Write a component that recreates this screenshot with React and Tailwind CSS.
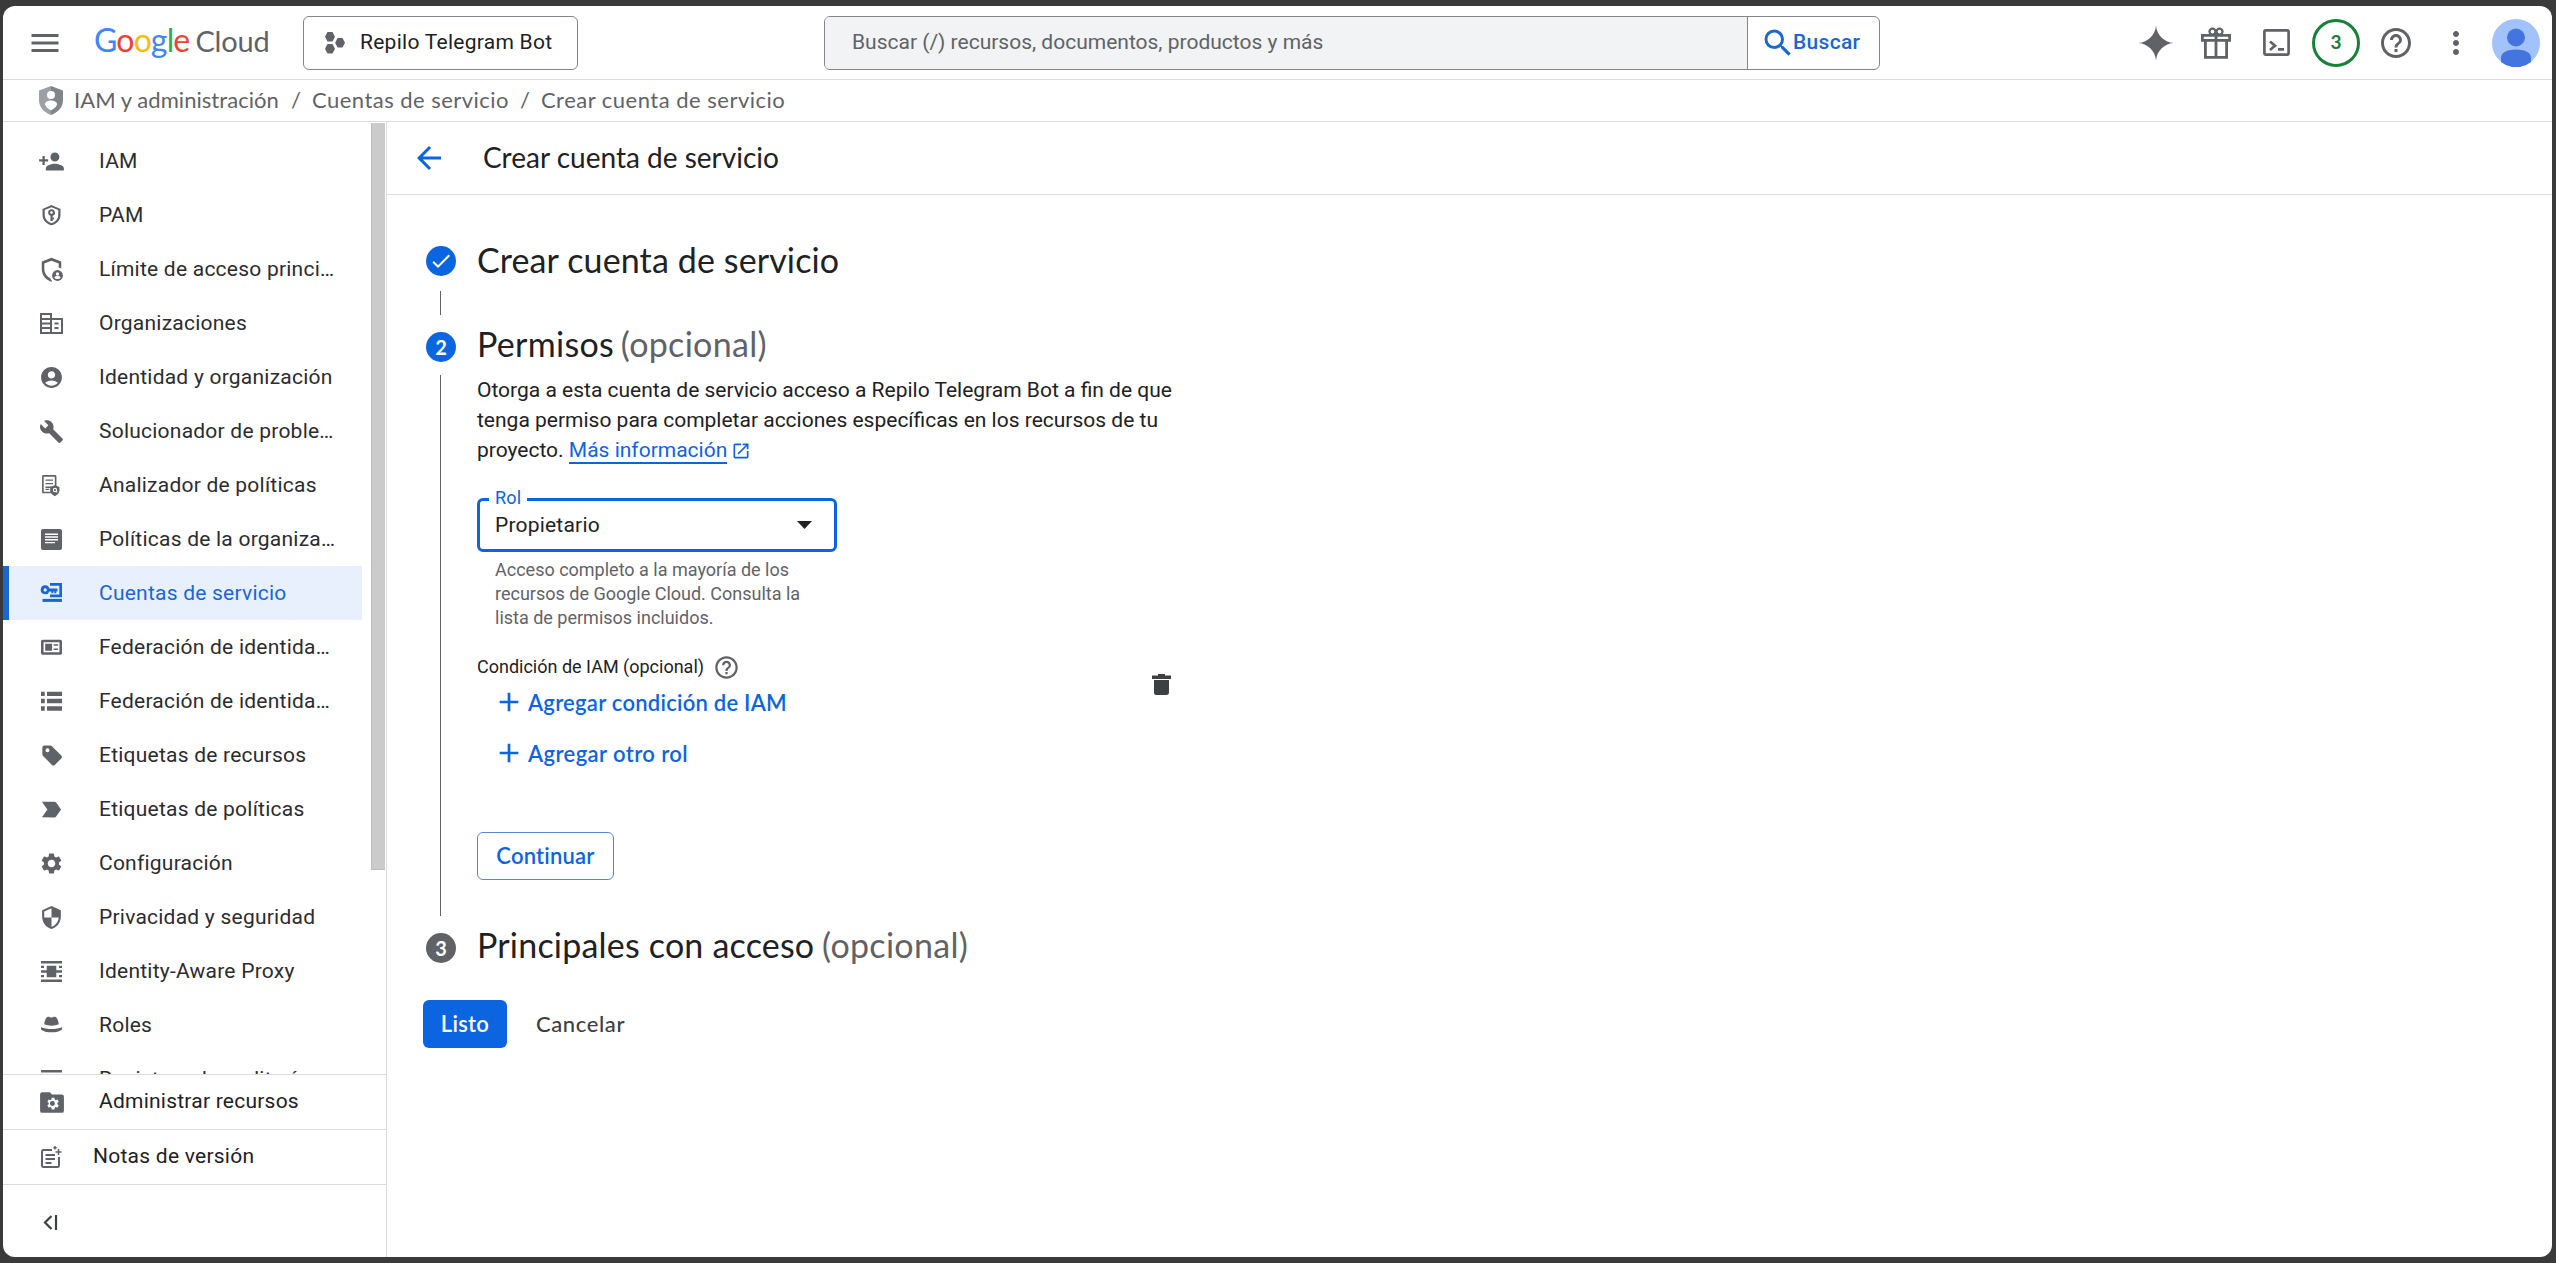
import React from "react";
import {
  MdPersonAdd, MdAccountCircle, MdBuild, MdLabelImportant,
  MdSettings, MdSecurity, MdHelpOutline, MdMoreVert, MdSearch, MdArrowBack, MdOpenInNew, MdMenu, MdAdd, MdCheck,
} from "react-icons/md";

const G = "font-['Lato',sans-serif]";

function Svg({ children, size = 27, box = 18, className = "" }) {
  return (
    <svg width={size} height={size} viewBox={`0 0 ${box} ${box}`} fill="currentColor" className={className}>
      {children}
    </svg>
  );
}

const ShieldKey = () => (
  <Svg>
    <path d="M9 2.400 15 5v4c0 3.300-2.400 5.800-6 6.900C5.400 14.800 3 12.300 3 9V5z" transform="translate(0 -.35)" />
    <path d="M9 3.500 13.500 5.300V8.700c0 2.500-1.700 4.500-4.500 5.500-2.800-1-4.500-3-4.500-5.500V5.300z" fill="#fff" />
    <path fillRule="evenodd" d="M9 4.800a2.200 2.200 0 0 0-.7 4.300v3.500h1.500v-.9h.8v-1.300h-.8V9.100A2.200 2.200 0 0 0 9 4.800zm0 1.300a.9.9 0 1 1 0 1.800.9.900 0 0 1 0-1.800z" />
  </Svg>
);

const ShieldPerson = () => (
  <Svg>
    <path d="M9 1.200 2.500 3.700v5.100c0 3.800 2.600 7 6.300 8.300l.6-.2-1.300-2.100C5.700 13.500 4.200 11.300 4.200 8.800V5L9 3.100 13.800 5v2.700l1.700.6V3.700z" />
    <circle cx="13" cy="13" r="3.600" />
    <circle cx="13" cy="12" r="1.100" fill="#fff" />
    <path d="M10.900 14.400c.4-.9 1.200-1 2.100-1s1.700.1 2.100 1c-.5.700-1.200 1-2.100 1s-1.600-.3-2.100-1z" fill="#fff" />
  </Svg>
);

const Building = () => (
  <svg width="23" height="21" viewBox="0 0 23 21" fill="none" stroke="currentColor" strokeWidth="2">
    <path d="M1 1h10v19H1zM11 6h11v14H11M1 6h10M1 10.500h10M1 15h10M14.500 10.500h4M14.500 15h4" />
  </svg>
);

const Article = () => (
  <svg width="21" height="21" viewBox="0 0 21 21">
    <rect width="21" height="21" rx="2" fill="currentColor" />
    <path d="M4 5.200h13M4 8h13M4 10.800h13M4 13.600h10" stroke="#fff" strokeWidth="1.400" />
  </svg>
);

const DocSearch = () => (
  <Svg>
    <path fillRule="evenodd" d="M3.600 2h7.800c.5 0 .9.400.9.900v6.600h-1.100V3.100H3.800v10h4.800v1.100h-5c-.5 0-.9-.4-.9-.9V2.900c0-.5.400-.9.900-.9z" />
    <path d="M5 5h5v.9H5zm0 2.300h5v.9H5zm0 2.400h4v.9H5zm0 1.500h2.500v.8H5z" />
    <path d="M11.200 8.800l3.100 1.200v2.200c0 1.800-1.300 3.200-3.100 3.900-1.800-.7-3.100-2.100-3.100-3.900V10z" />
    <circle cx="11.300" cy="12" r="1.100" fill="none" stroke="#fff" strokeWidth=".7" />
    <path d="M12 12.800l.8.800" stroke="#fff" strokeWidth=".7" />
  </Svg>
);

const KeyDesk = () => (
  <Svg>
    <path d="M8 2h8v9.500H8V9.700h6.200V3.800H8z" />
    <path d="M4.800 3.500a3 3 0 1 0 2.800 4.100h1.300v1.200h1.300V7.600h.7v1.200h1.300V7.600H13V5.700H7.600a3 3 0 0 0-2.800-2.200zm0 2a1.100 1.100 0 1 1 0 2.200 1.100 1.100 0 0 1 0-2.200z" fillRule="evenodd" />
    <path d="M3 12.600h13v2H3z" />
  </Svg>
);

const IdCard = () => (
  <Svg>
    <path fillRule="evenodd" d="M3.200 3.800h11.600c.7 0 1.200.5 1.200 1.200v7.600c0 .7-.5 1.200-1.200 1.200H3.200c-.7 0-1.200-.5-1.200-1.200V5c0-.7.5-1.200 1.200-1.200zm.5 1.700v6.600h10.600V5.500z" />
    <path d="M4.800 6.500h4.600v4.600H4.800zm5.600.3h3v1.100h-3zm0 2.800h3v1.100h-3z" />
  </Svg>
);

const Rows = () => (
  <Svg>
    <path d="M2 2.500h2.500v2.900H2zm4 0h10v2.900H6zM2 7.200h2.500v3H2zm4 0h10v3H6zm-4 4.900h2.500v3H2zm4 0h10v3H6z" />
  </Svg>
);

const Tag = () => (
  <Svg>
    <path fillRule="evenodd" d="M4.400 2.300h3.700c.5 0 .9.200 1.200.5l6.200 6.200c.6.600.6 1.400 0 2l-4.300 4.300c-.5.500-1.300.5-1.900 0L3.400 9.400c-.3-.3-.5-.7-.5-1.200V3.700c0-.8.700-1.400 1.500-1.400zM6.300 4.200a1.300 1.300 0 1 0 0 2.600 1.300 1.300 0 0 0 0-2.600z" />
  </Svg>
);

const Proxy = () => (
  <Svg>
    <path d="M2 2h14v1.700H2zm0 12.300h14V16H2zM5.800 5.200h6.400v7.600H5.800zM2 8.200h14v1.600H2zM2 5.200h2v1.400H2zm12 0h2v1.400h-2zM2 11.400h2v1.400H2zm12 0h2v1.400h-2z" />
  </Svg>
);

const Hat = () => (
  <Svg>
    <path d="M6.300 3.300c.9-.4 1.700.4 2.700.4s1.800-.8 2.700-.4c1.300.5 1.900 3 2.200 4.900-1.400.6-3 .9-4.900.9s-3.500-.3-4.900-.9c.3-1.900.9-4.400 2.200-4.900z" />
    <path d="M2 10.200c2 .8 4.300 1.200 7 1.200s5-.4 7-1.200v1.400c-1.500 1.300-4 1.900-7 1.900s-5.500-.6-7-1.900z" />
  </Svg>
);

const ListBars = () => (
  <Svg>
    <path d="M2 2.600h14v1.700H2zm0 4h14v1.700H2zm0 4h14v1.700H2z" />
  </Svg>
);

const md = (C, size = 25) => () => <C size={size} />;

const NAV = [
  [md(MdPersonAdd, 27), "IAM"],
  [ShieldKey, "PAM"],
  [ShieldPerson, "Límite de acceso princi…"],
  [Building, "Organizaciones"],
  [md(MdAccountCircle), "Identidad y organización"],
  [md(MdBuild), "Solucionador de proble…"],
  [DocSearch, "Analizador de políticas"],
  [Article, "Políticas de la organiza…"],
  [KeyDesk, "Cuentas de servicio"],
  [IdCard, "Federación de identida…"],
  [Rows, "Federación de identida…"],
  [Tag, "Etiquetas de recursos"],
  [md(MdLabelImportant, 27), "Etiquetas de políticas"],
  [md(MdSettings), "Configuración"],
  [md(MdSecurity), "Privacidad y seguridad"],
  [Proxy, "Identity-Aware Proxy"],
  [Hat, "Roles"],
  [ListBars, "Registros de auditoría"],
];
const ACTIVE = 8;

function Header() {
  return (
    <header className="flex h-[74px] shrink-0 items-center border-b border-[#dadce0] text-[#5f6368]">
      <MdMenu size={36} className="ml-6 shrink-0" />
      <div className={`ml-[31px] flex w-[209px] shrink-0 items-baseline whitespace-nowrap pb-[5px] text-[32px] leading-9 ${G}`}>
        <span className="tracking-[-0.85px]">
          <span className="text-[#4285f4]">G</span><span className="text-[#ea4335]">o</span>
          <span className="text-[#fbbc04]">o</span><span className="text-[#4285f4]">g</span>
          <span className="text-[#34a853]">l</span><span className="text-[#ea4335]">e</span>
        </span>
        <span className="ml-[6px] text-[29px] tracking-[-0.2px]">Cloud</span>
      </div>
      <button className="flex h-[54px] w-[275px] items-center rounded-md border border-[#80868b] pl-[21px] text-[21px] text-[#202124]">
        <svg width="20" height="22" viewBox="0 0 20 22" fill="#5f6368">
          <path d="M2.500 0h5L10 4.800 7.500 9.500h-5L0 4.800zM12.600 6h4.900L20 10.700l-2.500 4.700h-4.900l-2.500-4.700zM2.500 12h5l2.500 4.700L7.500 21.500h-5L0 16.700z" />
        </svg>
        <span className="ml-[15px] tracking-[0.27px]">Repilo Telegram Bot</span>
      </button>
      <div className="ml-[246px] flex h-[54px] w-[1056px] overflow-hidden rounded-md border border-[#80868b] text-[21px]">
        <div className="flex w-[922px] items-center bg-[#f1f3f4] pl-[27px]">
          <span>Buscar (/) recursos, documentos, productos y más</span>
        </div>
        <div className="flex flex-1 items-center border-l border-[#80868b] pl-3 font-medium text-[#1967d2]">
          <MdSearch size={36} />
          <span className="-ml-[3px] tracking-[0.3px]">Buscar</span>
        </div>
      </div>
      <div className="ml-auto mr-3 flex items-center gap-3">
        <div className="flex size-12 items-center justify-center">
          <svg width="36" height="36" viewBox="0 0 36 36" fill="#5f6368">
            <path d="M18 .5C18.800 10 26 17.200 35.500 18 26 18.800 18.800 26 18 35.500 17.200 26 10 18.800.5 18 10 17.200 17.200 10 18 .5z" />
          </svg>
        </div>
        <div className="flex size-12 items-center justify-center">
          <svg width="30" height="32" viewBox="0 0 30 32" fill="none" stroke="#5f6368" strokeWidth="2.800">
            <path d="M1.400 8.400h27.200v5H1.400zM4.400 13.400v17h21.200v-17M15 6v24" />
            <circle cx="11.500" cy="4.600" r="3" strokeWidth="2.300" />
            <circle cx="18.500" cy="4.600" r="3" strokeWidth="2.300" />
          </svg>
        </div>
        <div className="flex size-12 items-center justify-center">
          <svg width="27" height="27" viewBox="0 0 27 27" fill="none" stroke="#5f6368" strokeWidth="2.700">
            <rect x="1.400" y="1.400" width="24.200" height="24.200" rx="1.500" />
            <path d="M7 12.500l5 4.300-5 4.300M15 20.300h6" />
          </svg>
        </div>
        <div className={`flex size-12 items-center justify-center rounded-full border-3 border-[#188038] text-[19px] font-bold text-[#188038] ${G}`}>3</div>
        <div className="flex size-12 items-center justify-center"><MdHelpOutline size={36} /></div>
        <div className="flex size-12 items-center justify-center"><MdMoreVert size={36} /></div>
        <svg width="48" height="48" viewBox="0 0 48 48">
          <circle cx="24" cy="24" r="24" fill="#a1c2fa" />
          <circle cx="24" cy="18.500" r="9" fill="#4374e0" />
          <path d="M9 43v-4c0-5 5-8.500 15-8.500S39 34 39 39v4a24 24 0 0 1-30 0z" fill="#4374e0" />
        </svg>
      </div>
    </header>
  );
}

function Breadcrumb() {
  return (
    <nav className={`flex h-[42px] shrink-0 items-center whitespace-nowrap border-b border-[#dadce0] pl-9 text-[22px] leading-6 text-[#5f6368] ${G}`}>
      <svg width="24" height="29" viewBox="0 0 24 29">
        <path d="M12 0 0 4.500V14c0 7 5 12.500 12 15z" fill="#9aa0a6" />
        <path d="M12 0l12 4.500V14c0 7-5 12.500-12 15z" fill="#80868b" />
        <circle cx="12" cy="9" r="4" fill="#fff" />
        <path d="M6 18.500c0-3 3-4 6-4s6 1 6 4c-1 2.700-3.300 4.700-6 5.700-2.700-1-5-3-6-5.700z" fill="#fff" />
      </svg>
      <div className="flex pb-0.5">
        <span className="ml-[11px] w-[217px] tracking-[0.05px]">IAM y administración</span>
        <span className="w-[21px]">/</span>
        <span className="w-[208px] tracking-[0.47px]">Cuentas de servicio</span>
        <span className="w-[21px]">/</span>
        <span className="tracking-[0.49px]">Crear cuenta de servicio</span>
      </div>
    </nav>
  );
}

function Sidebar() {
  return (
    <aside className="flex w-[384px] shrink-0 flex-col border-r border-[#dadce0] text-[21px] text-[#202124]">
      <div className="flex h-[952px] overflow-hidden">
        <ul className="w-[359px] pt-3">
          {NAV.map(([Icon, label], i) => (
            <li
              key={i}
              className={
                "flex h-[54px] items-center border-l-6 " +
                (i === ACTIVE ? "border-[#1967d2] bg-[#e8f0fe] text-[#1967d2]" : "border-transparent text-[#2b2c2f]")
              }
            >
              <span className={"ml-7 flex w-[29px] shrink-0 justify-center " + (i === ACTIVE ? "" : "text-[#5f6368]")}>
                <Icon />
              </span>
              <span className="ml-[33px] whitespace-nowrap pt-px tracking-[0.23px]">{label}</span>
            </li>
          ))}
        </ul>
        <div className="ml-[9px] mt-px h-[747px] w-3.5 border-b border-l border-[#bdbdbd] bg-[#cbcbcb]" />
      </div>
      <div className="flex h-[55px] items-center border-t border-[#dadce0] pl-9">
        <Svg box={24} size={26} className="text-[#5f6368]">
          <path d="M10 3H3a2 2 0 0 0-2 2v15a2 2 0 0 0 2 2h18a2 2 0 0 0 2-2V7a2 2 0 0 0-2-2h-9z" />
          <g transform="translate(4.700 5.800) scale(.64)" fill="#fff">
            <path d="M19.140 12.940c.04-.3.060-.61.060-.94s-.02-.64-.07-.94l2.030-1.580-1.920-3.320-2.390.96c-.5-.38-1.030-.7-1.620-.94l-.36-2.540h-3.840l-.36 2.540c-.59.24-1.130.57-1.620.94l-2.390-.96-1.920 3.320 2.030 1.580c-.05.3-.09.63-.09.94s.02.64.070.94l-2.030 1.580 1.920 3.320 2.390-.96c.5.38 1.030.7 1.620.94l.36 2.540h3.840l.36-2.540c.59-.24 1.130-.56 1.620-.94l2.390.96 1.920-3.320zM12 15.600a3.600 3.600 0 1 1 0-7.200 3.600 3.600 0 0 1 0 7.200z" />
          </g>
        </Svg>
        <span className="ml-[34px] tracking-[0.23px]">Administrar recursos</span>
      </div>
      <div className="flex h-[55px] items-center border-t border-[#dadce0] pl-[38px]">
        <svg width="21" height="22" viewBox="0 0 21 22" fill="none" stroke="#5f6368" strokeWidth="2">
          <path d="M11 4H2.500C1.700 4 1 4.500 1 5.300v14.400c0 .8.700 1.300 1.500 1.300h14c.8 0 1.500-.5 1.500-1.300V11" />
          <path d="M4.500 9h9.500M4.500 13h9.500M4.500 17h6" strokeWidth="1.900" />
          <path d="M17.500 3v6M14.500 6h6M14 0v3.400M12.300 1.700h3.400" strokeWidth="1.500" />
        </svg>
        <span className="ml-[31px] tracking-[0.25px]">Notas de versión</span>
      </div>
      <div className="flex flex-1 items-center border-t border-[#dadce0] pl-10 pt-0.5">
        <svg width="15" height="15" viewBox="0 0 15 15" fill="none" stroke="#3c4043" strokeWidth="2.200">
          <path d="M8.500 1 2 7.500 8.500 14M13 0v15" />
        </svg>
      </div>
    </aside>
  );
}

function Dot({ children, className }) {
  return (
    <span className={`flex size-[30px] shrink-0 items-center justify-center rounded-full text-[20px] font-bold text-white ${G} ` + className}>
      {children}
    </span>
  );
}

const H = `h-[30px] whitespace-nowrap text-[34px] text-[#202124] ${G}`;

function AddButton({ children, className }) {
  return (
    <button className={`ml-4 flex h-9 items-center text-[22px] font-semibold text-[#0b65e1] ${G} ` + className}>
      <MdAdd size={32} />
      <span className="ml-[3px]">{children}</span>
    </button>
  );
}

function Stepper() {
  return (
    <div className="pl-[39px] pt-[51px]">
      <div className="flex gap-[21px]">
        <div className="flex flex-col items-center">
          <Dot className="bg-[#0b65e1]"><MdCheck size={24} /></Dot>
          <div className="mb-[17px] mr-px mt-[15px] h-6 w-px bg-[#5f6368]" />
        </div>
        <h2 className={H + " leading-7 tracking-[0.12px]"}>Crear cuenta de servicio</h2>
      </div>

      <div className="flex h-[601px] gap-[21px]">
        <div className="flex flex-col items-center">
          <Dot className="bg-[#0b65e1]">2</Dot>
          <div className="mb-[17px] mr-px mt-[13px] w-px flex-1 bg-[#5f6368]" />
        </div>
        <div className="w-[700px]">
          <h2 className={H + " leading-6"}>
            <span className="tracking-[0.3px]">Permisos</span> <span className="-ml-0.5 tracking-[0.3px] text-[#5f6368]">(opcional)</span>
          </h2>
          <p className="mt-[13px] whitespace-nowrap text-[21px] leading-[30px] text-[#202124]">
            Otorga a esta cuenta de servicio acceso a Repilo Telegram Bot a fin de que<br />
            tenga permiso para completar acciones específicas en los recursos de tu<br />
            proyecto. <a className="border-b-2 border-[#0b65e1] text-[#0b65e1]">Más información</a>
            <MdOpenInNew size={20} className="ml-1 inline text-[#0b65e1]" />
          </p>
          <div className="mt-[33px] flex">
            <div className="w-[675px]">
              <div className="relative flex h-[54px] w-[360px] items-center justify-between rounded-md border-3 border-[#0b65e1] pl-[15px] pr-[22px] text-[21px] text-[#202124]">
                <span className="absolute -top-[15px] left-[9px] bg-white px-[6px] text-lg leading-6 tracking-[0.2px] text-[#0b65e1]">Rol</span>
                <span className="pt-px tracking-[0.2px]">Propietario</span>
                <svg width="15" height="8" viewBox="0 0 15 8"><path d="M0 0h15L7.500 8z" fill="#202124" /></svg>
              </div>
              <p className="mt-[6px] pl-[18px] text-lg leading-6 text-[#5f6368]">
                Acceso completo a la mayoría de los<br />
                recursos de Google Cloud. Consulta la<br />
                lista de permisos incluidos.
              </p>
              <div className="mt-6 flex h-[26px] items-center text-lg text-[#202124]">
                <span>Condición de IAM (opcional)</span>
                <MdHelpOutline size={27} className="ml-[9px] text-[#5f6368]" />
              </div>
              <AddButton className="mt-1 tracking-[0.25px]">Agregar condición de IAM</AddButton>
              <AddButton className="mt-[15px] tracking-[0.4px]">Agregar otro rol</AddButton>
            </div>
            <svg width="19" height="21" viewBox="0 0 19 21" fill="#3c4043" className="mt-44">
              <path d="M0 1.500h6V0h7v1.500h6V5H0zM2 6h15v12.500c0 1.400-1.100 2.500-2.500 2.500h-10A2.500 2.500 0 0 1 2 18.500z" />
            </svg>
          </div>
          <button className={`mt-[61px] flex h-12 w-[137px] items-center justify-center rounded-md border border-[#5b86cf] pb-0.5 text-[22px] font-semibold text-[#0b65e1] ${G}`}>
            <span className="tracking-[0.2px]">Continuar</span>
          </button>
        </div>
      </div>

      <div className="flex gap-[21px]">
        <Dot className="bg-[#5f6368]">3</Dot>
        <h2 className={H + " leading-6"}>
          <span className="tracking-[0.2px]">Principales con acceso</span> <span className="-ml-px tracking-[0.3px] text-[#5f6368]">(opcional)</span>
        </h2>
      </div>

      <div className={`-ml-[3px] mt-[37px] flex h-12 items-center text-[22px] ${G}`}>
        <button className="flex h-12 w-[84px] items-center justify-center rounded-md bg-[#0b65e1] pb-0.5 font-semibold text-white">
          <span className="tracking-[0.3px]">Listo</span>
        </button>
        <button className="ml-[29px] pb-0.5 font-medium tracking-[0.6px] text-[#3c4043]">Cancelar</button>
      </div>
    </div>
  );
}

export default function App() {
  return (
    <div className="h-[1263px] w-[2556px] bg-[#3a3a3a] pl-[3px] pt-[6px] font-['Roboto',sans-serif]">
      <div className="flex h-[1251px] w-[2549px] flex-col overflow-hidden rounded-xl bg-white">
        <Header />
        <Breadcrumb />
        <div className="flex min-h-0 flex-1">
          <Sidebar />
          <main className="flex-1">
            <div className="flex h-[73px] items-center border-b border-[#dadce0] pl-6">
              <MdArrowBack size={36} className="text-[#0b65e1]" />
              <h1 className={`ml-9 pb-0.5 text-[28px] leading-9 text-[#202124] ${G}`}>Crear cuenta de servicio</h1>
            </div>
            <Stepper />
          </main>
        </div>
      </div>
    </div>
  );
}
